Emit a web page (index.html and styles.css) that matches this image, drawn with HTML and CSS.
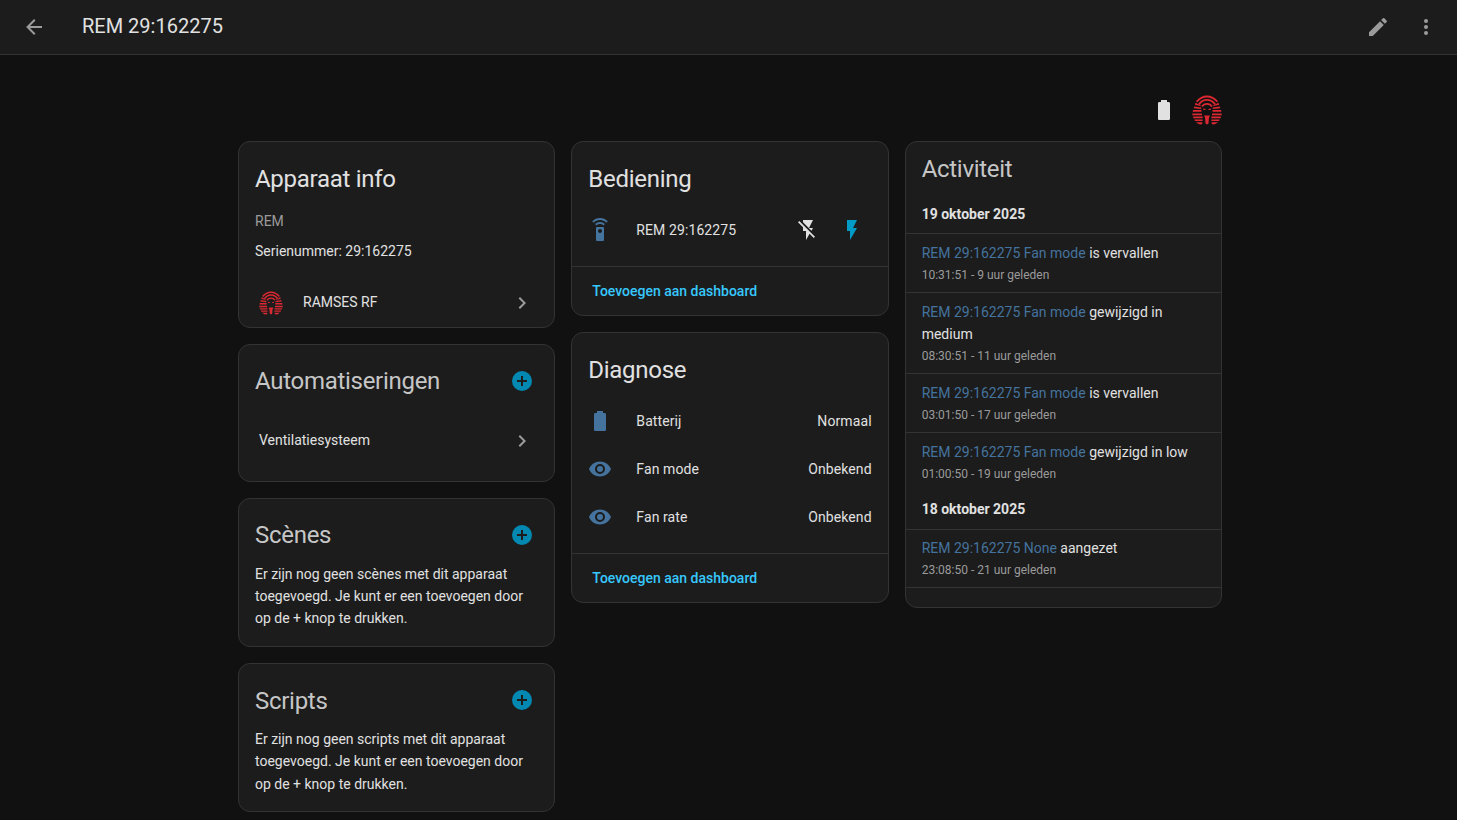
FILE: index.html
```html
<!DOCTYPE html>
<html lang="nl">
<head>
<meta charset="utf-8">
<title>REM 29:162275</title>
<link rel="stylesheet" href="styles.css">
</head>
<body>
<svg class="sprite" aria-hidden="true">
  <symbol id="battery" viewBox="0 0 24 24"><path d="M16.67,4H15V2H9V4H7.33A1.33,1.33 0 0,0 6,5.33V20.67C6,21.4 6.6,22 7.33,22H16.67A1.33,1.33 0 0,0 18,20.67V5.33C18,4.6 17.4,4 16.67,4Z"/></symbol>
  <symbol id="eye" viewBox="0 0 24 24"><path d="M12,9A3,3 0 0,0 9,12A3,3 0 0,0 12,15A3,3 0 0,0 15,12A3,3 0 0,0 12,9M12,17A5,5 0 0,1 7,12A5,5 0 0,1 12,7A5,5 0 0,1 17,12A5,5 0 0,1 12,17M12,4.5C7,4.5 2.73,7.61 1,12C2.73,16.39 7,19.5 12,19.5C17,19.5 21.27,16.39 23,12C21.27,7.61 17,4.5 12,4.5Z"/></symbol>
  <symbol id="chevron" viewBox="0 0 24 24"><path d="M8.59,16.58L13.17,12L8.59,7.41L10,6L16,12L10,18L8.59,16.58Z"/></symbol>
  <symbol id="plus" viewBox="0 0 24 24"><path d="M17,13H13V17H11V13H7V11H11V7H13V11H17M12,2A10,10 0 0,0 2,12A10,10 0 0,0 12,22A10,10 0 0,0 22,12A10,10 0 0,0 12,2Z"/></symbol>
  <symbol id="ramses" viewBox="0 0 30 30">
    <g fill="none" stroke="#dc2832" stroke-width="1.8">
      <path d="M4.600 6.800Q9 1.500 15 1.500T25.400 6.800"/>
      <path d="M6.800 9.600Q10 4.900 15 4.900T23.200 9.600"/>
      <path d="M10 11.500Q11.800 8.900 15 8.900T20 11.500"/>
    </g>
    <g fill="#dc2832">
      <path id="lappet" d="M3.500 7.800L8 9.900L9.500 11.200L2.800 9.800ZM2.200 11.400L9.300 12.400V14L1.700 13.200ZM1 15H9.500V16.800H.6ZM.3 18.500H10V20.300H.3ZM.9 21.600H10.600V23.200H1.400ZM2.300 24.400H10.600V26H3ZM4 27.200H10.300V28.700L9 29.500Q6.500 29.500 4 27.200Z"/>
      <use href="#lappet" transform="matrix(-1 0 0 1 30 0)"/>
      <path d="M11 13.500L13.800 14L13.300 15H11.500ZM19 13.500L16.200 14L16.700 15H18.500ZM12 20.500H18L16.900 23L16.500 28.500L15 29.500L13.500 28.500L13.100 23Z"/>
    </g>
  </symbol>
</svg>

<header class="toolbar">
  <svg class="icon" viewBox="0 0 24 24"><path d="M20,11V13H8L13.5,18.5L12.08,19.92L4.16,12L12.08,4.08L13.5,5.5L8,11H20Z"/></svg>
  <h1 class="toolbar-title">REM 29:162275</h1>
  <svg class="icon" viewBox="0 0 24 24"><path d="M20.71,7.04C21.1,6.65 21.1,6 20.71,5.63L18.37,3.29C18,2.9 17.35,2.9 16.96,3.29L15.12,5.12L18.87,8.87M3,17.25V21H6.75L17.81,9.93L14.06,6.18L3,17.25Z"/></svg>
  <svg class="icon" viewBox="0 0 24 24"><circle cx="12" cy="6" r="2"/><circle cx="12" cy="12" r="2"/><circle cx="12" cy="18" r="2"/></svg>
</header>

<main class="page">
  <div class="status">
    <svg class="icon"><use href="#battery"/></svg>
    <svg class="status-logo"><use href="#ramses"/></svg>
  </div>
  <div class="columns">
    <div class="column">
      <section class="card info">
        <h2>Apparaat info</h2>
        <p class="model">REM</p>
        <p class="serial">Serienummer: 29:162275</p>
        <div class="link-row integration">
          <svg class="icon logo"><use href="#ramses"/></svg>
          <span>RAMSES RF</span>
          <svg class="icon chevron"><use href="#chevron"/></svg>
        </div>
      </section>
      <section class="card automations">
        <div class="card-head"><h2>Automatiseringen</h2><svg class="icon add"><use href="#plus"/></svg></div>
        <div class="link-row"><span>Ventilatiesysteem</span><svg class="icon chevron"><use href="#chevron"/></svg></div>
      </section>
      <section class="card empty">
        <div class="card-head"><h2>Scènes</h2><svg class="icon add"><use href="#plus"/></svg></div>
        <p>Er zijn nog geen scènes met dit apparaat toegevoegd. Je kunt er een toevoegen door op de + knop te drukken.</p>
      </section>
      <section class="card empty scripts">
        <div class="card-head"><h2>Scripts</h2><svg class="icon add"><use href="#plus"/></svg></div>
        <p>Er zijn nog geen scripts met dit apparaat toegevoegd. Je kunt er een toevoegen door op de + knop te drukken.</p>
      </section>
    </div>

    <div class="column">
      <section class="card entities">
        <h2>Bediening</h2>
        <div class="entity">
          <svg class="icon state" viewBox="0 0 24 24"><path d="M12,0C8.96,0 6.21,1.23 4.22,3.22L5.63,4.63C7.26,3 9.5,2 12,2C14.5,2 16.74,3 18.36,4.64L19.77,3.23C17.79,1.23 15.04,0 12,0M7.05,6.05L8.46,7.46C9.37,6.56 10.62,6 12,6C13.38,6 14.63,6.56 15.54,7.46L16.95,6.05C15.68,4.78 13.93,4 12,4C10.07,4 8.32,4.78 7.05,6.05M12,15A2,2 0 0,1 10,13A2,2 0 0,1 12,11A2,2 0 0,1 14,13A2,2 0 0,1 12,15M15,9H9A1,1 0 0,0 8,10V22A1,1 0 0,0 9,23H15A1,1 0 0,0 16,22V10A1,1 0 0,0 15,9Z"/></svg>
          <span class="name">REM 29:162275</span>
          <div class="toggles">
            <svg class="icon" viewBox="0 0 24 24"><path d="M17,10H13L17,2H7V4.18L15.46,12.64M3.27,3L2,4.27L7,9.27V13H10V22L13.58,15.86L17.73,20L19,18.73L3.27,3Z"/></svg>
            <svg class="icon on" viewBox="0 0 24 24"><path d="M7,2V13H10V22L17,10H13L17,2H7Z"/></svg>
          </div>
        </div>
        <div class="actions">Toevoegen aan dashboard</div>
      </section>
      <section class="card entities">
        <h2>Diagnose</h2>
        <div class="entity"><svg class="icon state"><use href="#battery"/></svg><span class="name">Batterij</span><span>Normaal</span></div>
        <div class="entity"><svg class="icon state"><use href="#eye"/></svg><span class="name">Fan mode</span><span>Onbekend</span></div>
        <div class="entity"><svg class="icon state"><use href="#eye"/></svg><span class="name">Fan rate</span><span>Onbekend</span></div>
        <div class="actions">Toevoegen aan dashboard</div>
      </section>
    </div>

    <div class="column">
      <section class="card activity">
        <h2>Activiteit</h2>
        <h3>19 oktober 2025</h3>
        <div class="entry"><p><a>REM 29:162275 Fan mode</a> is vervallen</p><small>10:31:51 - 9 uur geleden</small></div>
        <div class="entry"><p><a>REM 29:162275 Fan mode</a> gewijzigd in medium</p><small>08:30:51 - 11 uur geleden</small></div>
        <div class="entry"><p><a>REM 29:162275 Fan mode</a> is vervallen</p><small>03:01:50 - 17 uur geleden</small></div>
        <div class="entry"><p><a>REM 29:162275 Fan mode</a> gewijzigd in low</p><small>01:00:50 - 19 uur geleden</small></div>
        <h3 class="next-day">18 oktober 2025</h3>
        <div class="entry last"><p><a>REM 29:162275 None</a> aangezet</p><small>23:08:50 - 21 uur geleden</small></div>
      </section>
    </div>
  </div>
</main>
</body>
</html>
```
FILE: styles.css
```css
* { box-sizing: border-box; }
body {
  margin: 0;
  height: 820px;
  overflow: hidden;
  background: #111;
  color: #e1e1e1;
  font: 14px/22px Roboto, sans-serif;
}
h1, h2, h3, p { margin: 0; font-weight: 400; }
.sprite { display: none; }
.icon { display: block; width: 24px; height: 24px; flex: none; fill: currentColor; }

.toolbar {
  display: flex;
  align-items: center;
  height: 55px;
  padding: 0 19px 0 22px;
  background: #1c1c1c;
  border-bottom: 1px solid #333;
  color: #9b9b9b;
}
.toolbar-title {
  flex: 1;
  margin: -2px 0 0 36px;
  color: #e1e1e1;
  font-size: 20px;
  line-height: 24px;
}
.toolbar .icon:last-child { margin-left: 24px; }

.page { width: 984px; margin: 0 0 0 238px; }
.status {
  display: flex;
  justify-content: flex-end;
  align-items: center;
  gap: 16px;
  height: 86px;
  padding-top: 24px;
}
.status-logo { width: 30px; height: 30px; }
.columns { display: grid; grid-template-columns: repeat(3, 1fr); gap: 16px; align-items: start; }
.column { display: flex; flex-direction: column; gap: 16px; }
.card {
  background: #1c1c1c;
  border: 1px solid #333;
  border-radius: 12px;
}
h2 { font-size: 24px; line-height: 48px; letter-spacing: -0.012em; }

.info { height: 187px; padding: 13px 16px 0; }
.model { margin-top: 7px; color: #9b9b9b; }
.serial { margin-top: 8px; }
.link-row { display: flex; align-items: center; height: 48px; padding: 0 4px; }
.link-row .chevron { margin: 2px 0 0 auto; color: #9b9b9b; }
.integration { margin-top: 16px; }
.logo { margin: 2px 20px 0 0; }

.automations { height: 138px; padding: 12px 16px; }
.card-head { display: flex; align-items: center; justify-content: space-between; height: 48px; padding-right: 4px; color: #c6c6c6; }
.add { color: #0288b1; }
.automations .link-row { margin-top: 11px; }
.empty { height: 149px; padding: 12px 16px; }
.empty p { margin-top: 4px; }
.scripts h2 { padding-top: 2px; }
.scripts p { line-height: 22.4px; }

.entities { padding-top: 13px; }
.entities h2 { padding: 0 16px; margin-bottom: 3px; }
.entity { display: flex; align-items: center; height: 48px; padding: 0 16px; letter-spacing: 0.1px; }
.state { color: #44739e; }
.name { flex: 1; margin-left: 24px; }
.toggles { display: flex; gap: 20px; padding-right: 8px; }
.toggles .on { color: #009ac7; }
.actions {
  height: 49px;
  margin-top: 12px;
  padding: 13px 20px 0;
  border-top: 1px solid #333;
  color: #37c8fd;
  font-weight: 500;
}

.activity { height: 467px; }
.activity h2 { height: 61px; padding: 3px 16px 0; color: #c6c6c6; }
.activity h3 { height: 30px; padding: 0 16px; font-size: 14px; line-height: 22px; font-weight: 700; }
.activity .next-day { height: 31px; margin-top: 7px; }
.entry { padding: 8px 16px 7px; border-top: 1px solid #333; }
.entry a { color: #44739e; }
.entry small { display: block; height: 21px; color: #9b9b9b; font-size: 12px; line-height: 22px; }
.entry.last { padding-top: 7px; border-bottom: 1px solid #333; }
```
